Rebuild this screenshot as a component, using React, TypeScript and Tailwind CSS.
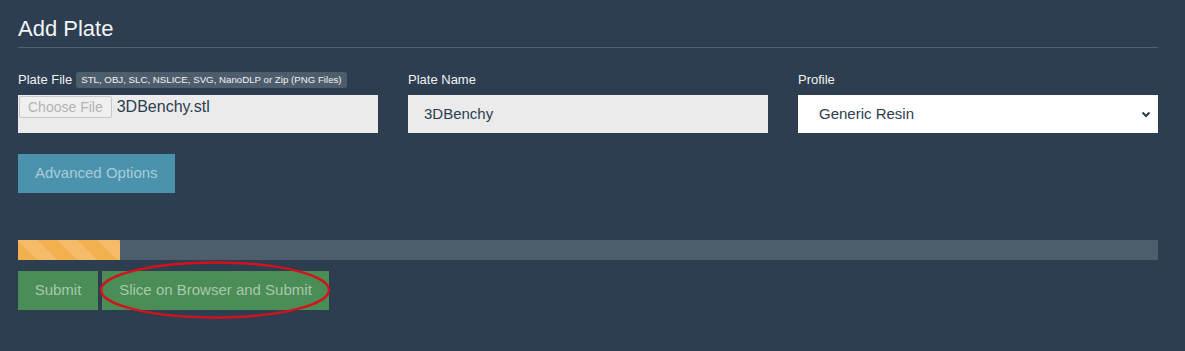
export default function App() {
  return (
    <div className="min-h-[351px] w-full bg-[#2c3e50] font-['Liberation_Sans',Arial,sans-serif] text-white">
      <div className="ml-[18px] w-[1140px] pt-[16px]">
        <h2 className="text-[22px] leading-[26px] text-[#f2f4f6]">Add Plate</h2>
        <div className="mt-[5px] h-px bg-[#52616f]" />

        <div className="mt-[24px] grid grid-cols-3 gap-x-[30px]">
          <div>
            <label className="flex h-[16px] items-center text-[13px] text-[#eef1f4]">
              Plate File
              <span className="ml-[4px] rounded-[3px] bg-[#4e5d6c] px-[5px] py-[2px] text-[9.7px] leading-[12px] text-[#f0f3f5]">
                STL, OBJ, SLC, NSLICE, SVG, NanoDLP or Zip (PNG Files)
              </span>
            </label>
            <div className="mt-[7px] flex h-[38px] items-start bg-[#ebebeb] px-px pt-px">
              <div className="flex h-[22px] items-center rounded-[2px] border border-[#c8c8c8] bg-[#efefef] px-[8px] text-[14px] text-[#b3b3b3]">
                Choose File
              </div>
              <span className="ml-[5px] text-[16px] leading-[22px] text-[#2c3e50]">3DBenchy.stl</span>
            </div>
          </div>

          <div>
            <label className="flex h-[16px] items-center text-[13px] text-[#eef1f4]">Plate Name</label>
            <div className="mt-[7px] flex h-[38px] items-center bg-[#ebebeb] px-[16px] text-[15px] text-[#2c3e50]">
              3DBenchy
            </div>
          </div>

          <div>
            <label className="flex h-[16px] items-center text-[13px] text-[#eef1f4]">Profile</label>
            <div className="mt-[7px] flex h-[38px] items-center justify-between bg-white pl-[21px] pr-[7px] text-[15px] text-[#2c3e50]">
              <span>Generic Resin</span>
              <svg width="10" height="8" viewBox="0 0 10 8" fill="none" stroke="#2c3e50" strokeWidth="2">
                <path d="M1.5 2.5 5 6 8.5 2.5" />
              </svg>
            </div>
          </div>
        </div>

        <button className="mt-[21px] h-[39px] bg-[#4b93ac] px-[17px] text-[15px] text-[#a9cbd8]">
          Advanced Options
        </button>

        <div className="mt-[47px] h-[20px] bg-[#4e5d6c]">
          <div className="h-full w-[102px] bg-[#f2b04f] bg-[linear-gradient(45deg,rgba(255,255,255,.15)_25%,transparent_25%,transparent_50%,rgba(255,255,255,.15)_50%,rgba(255,255,255,.15)_75%,transparent_75%,transparent)] bg-[length:40px_40px]" />
        </div>

        <div className="relative mt-[11px] flex gap-[4px]">
          <button className="h-[39px] w-[80px] bg-[#4b8d57] text-[15px] text-[#a9c8a9]">Submit</button>
          <button className="h-[39px] w-[227px] bg-[#4b8d57] text-[15px] text-[#a9c8a9]">
            Slice on Browser and Submit
          </button>
          <svg
            className="pointer-events-none absolute left-[81px] top-[-10px]"
            width="232"
            height="58"
            viewBox="0 0 232 58"
            fill="none"
          >
            <ellipse cx="116" cy="29" rx="114" ry="27.5" stroke="#d3121c" strokeWidth="2.4" />
          </svg>
        </div>
      </div>
    </div>
  )
}
